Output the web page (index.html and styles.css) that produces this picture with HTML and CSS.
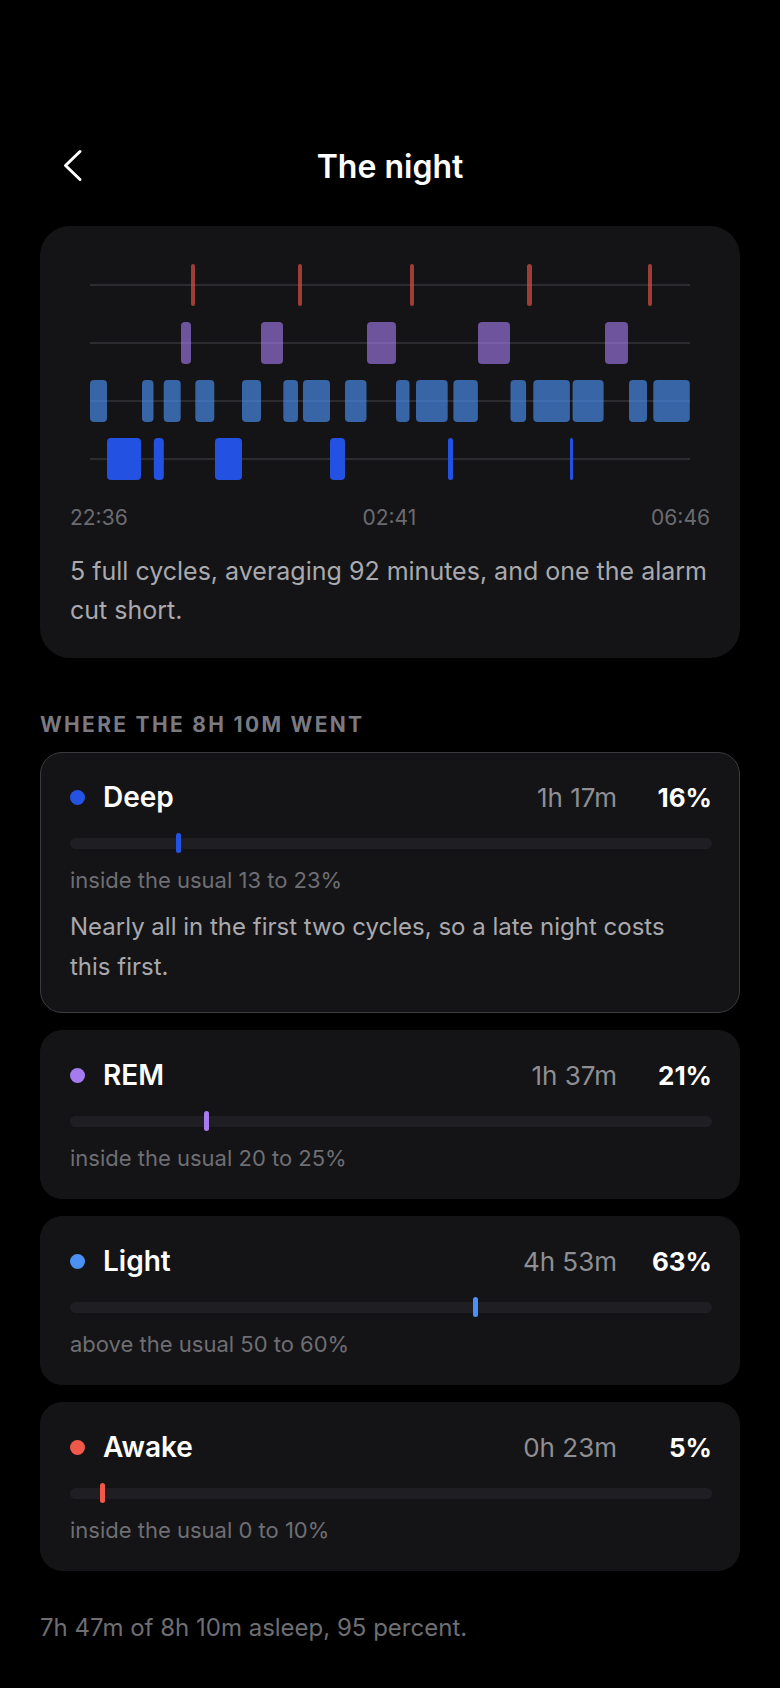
FILE: index.html
```html
<!DOCTYPE html>
<html>
<head>
    <title>The night</title>
    <link rel="stylesheet" href="styles.css">
</head>
<body>
    <header class="topbar">
        <a class="back" href="#">
            <svg width="22" height="34" viewBox="0 0 22 34"><path d="M18 2.5 L3.5 16.5 L18 30.5" fill="none" stroke="#fff" stroke-width="3" stroke-linecap="round" stroke-linejoin="round"/></svg>
        </a>
        <h1>The night</h1>
        <span></span>
    </header>

    <section class="card night">
        <svg class="hypno" width="600" height="230" viewBox="0 0 600 230">
            <!-- guide lines -->
            <g stroke="#2c2c30" stroke-width="2">
                <line x1="0" y1="29" x2="600" y2="29"/>
                <line x1="0" y1="87" x2="600" y2="87"/>
                <line x1="0" y1="145" x2="600" y2="145"/>
                <line x1="0" y1="203" x2="600" y2="203"/>
            </g>
            <!-- awake -->
            <g fill="#f0584a" fill-opacity="0.62">
                <rect x="101" y="8" width="4" height="42" rx="2"/>
                <rect x="208" y="8" width="4" height="42" rx="2"/>
                <rect x="320" y="8" width="4" height="42" rx="2"/>
                <rect x="437" y="8" width="5" height="42" rx="2.5"/>
                <rect x="558" y="8" width="4" height="42" rx="2"/>
            </g>
            <!-- rem -->
            <g fill="#a77bf0" fill-opacity="0.62">
                <rect x="91" y="66" width="10" height="42" rx="4"/>
                <rect x="171" y="66" width="22" height="42" rx="4"/>
                <rect x="277" y="66" width="29" height="42" rx="4"/>
                <rect x="388" y="66" width="32" height="42" rx="4"/>
                <rect x="515" y="66" width="23" height="42" rx="4"/>
            </g>
            <!-- light -->
            <g fill="#4a90f5" fill-opacity="0.65">
                <rect x="0" y="124" width="17" height="42" rx="4"/>
                <rect x="52" y="124" width="11.5" height="42" rx="4"/>
                <rect x="73.7" y="124" width="17" height="42" rx="4"/>
                <rect x="105.3" y="124" width="19" height="42" rx="4"/>
                <rect x="152" y="124" width="19" height="42" rx="4"/>
                <rect x="193.3" y="124" width="14.7" height="42" rx="4"/>
                <rect x="213" y="124" width="27" height="42" rx="4"/>
                <rect x="255" y="124" width="21.5" height="42" rx="4"/>
                <rect x="306" y="124" width="13.5" height="42" rx="4"/>
                <rect x="326" y="124" width="31.7" height="42" rx="4"/>
                <rect x="363.4" y="124" width="24.5" height="42" rx="4"/>
                <rect x="420.5" y="124" width="15.6" height="42" rx="4"/>
                <rect x="443.3" y="124" width="36.6" height="42" rx="4"/>
                <rect x="482.6" y="124" width="31" height="42" rx="4"/>
                <rect x="539" y="124" width="18" height="42" rx="4"/>
                <rect x="563.3" y="124" width="36.5" height="42" rx="4"/>
            </g>
            <!-- deep -->
            <g fill="#2352e2">
                <rect x="17" y="182" width="34" height="42" rx="4"/>
                <rect x="63.8" y="182" width="10" height="42" rx="4"/>
                <rect x="125" y="182" width="27" height="42" rx="4"/>
                <rect x="240" y="182" width="15" height="42" rx="4"/>
                <rect x="358" y="182" width="5" height="42" rx="2.5"/>
                <rect x="480" y="182" width="3" height="42" rx="1.5"/>
            </g>
        </svg>
        <div class="times">
            <span>22:36</span>
            <span>02:41</span>
            <span>06:46</span>
        </div>
        <p class="night-note">5 full cycles, averaging 92 minutes, and one the alarm cut short.</p>
    </section>

    <h2 class="section-title">WHERE THE 8H 10M WENT</h2>

    <div class="stages">
        <div class="stage open">
            <div class="stage-head">
                <span class="dot deep"></span>
                <span class="stage-name">Deep</span>
                <span class="stage-time">1h 17m</span>
                <span class="stage-pct">16%</span>
            </div>
            <div class="meter">
                <span class="mark deep" style="left: 16.5%"></span>
            </div>
            <p class="usual">inside the usual 13 to 23%</p>
            <p class="stage-note">Nearly all in the first two cycles, so a late night costs this first.</p>
        </div>

        <div class="stage">
            <div class="stage-head">
                <span class="dot rem"></span>
                <span class="stage-name">REM</span>
                <span class="stage-time">1h 37m</span>
                <span class="stage-pct">21%</span>
            </div>
            <div class="meter">
                <span class="mark rem" style="left: 20.8%"></span>
            </div>
            <p class="usual">inside the usual 20 to 25%</p>
        </div>

        <div class="stage">
            <div class="stage-head">
                <span class="dot light"></span>
                <span class="stage-name">Light</span>
                <span class="stage-time">4h 53m</span>
                <span class="stage-pct">63%</span>
            </div>
            <div class="meter">
                <span class="mark light" style="left: 62.7%"></span>
            </div>
            <p class="usual">above the usual 50 to 60%</p>
        </div>

        <div class="stage">
            <div class="stage-head">
                <span class="dot awake"></span>
                <span class="stage-name">Awake</span>
                <span class="stage-time">0h 23m</span>
                <span class="stage-pct">5%</span>
            </div>
            <div class="meter">
                <span class="mark awake" style="left: 4.7%"></span>
            </div>
            <p class="usual">inside the usual 0 to 10%</p>
        </div>
    </div>

    <p class="summary">7h 47m of 8h 10m asleep, 95 percent.</p>
</body>
</html>
```

FILE: styles.css
```css
body {
    font-family: Inter, "Noto Sans", sans-serif;
    margin: 0;
    padding: 136px 40px 40px;
    background-color: #000;
    color: #fff;
}
.topbar {
    display: grid;
    grid-template-columns: 1fr auto 1fr;
    align-items: center;
    height: 60px;
    margin-bottom: 30px;
}
.back svg {
    display: block;
    margin-left: 22px;
}
.topbar h1 {
    margin: 0;
    font-size: 32px;
    font-weight: 600;
}
.card {
    background-color: #141416;
    border-radius: 30px;
    padding: 30px 30px 28px;
}
.hypno {
    display: block;
    margin: 0 auto;
}
.times {
    display: flex;
    justify-content: space-between;
    margin-top: 20px;
    font-size: 21px;
    line-height: 24px;
    color: #6b6b70;
}
.night-note {
    margin: 22px 0 0;
    font-size: 25px;
    line-height: 39px;
    color: #a9a9ae;
}
.section-title {
    margin: 55px 0 15px;
    font-size: 21px;
    line-height: 24px;
    font-weight: 700;
    letter-spacing: 0.11em;
    color: #7a7a80;
}
.stages {
    display: flex;
    flex-direction: column;
    gap: 17px;
}
.stage {
    background-color: #141416;
    border: 1px solid #141416;
    border-radius: 22px;
    padding: 29px 27px 27px 29px;
}
.stage.open {
    border-color: #3a3a3f;
    padding-bottom: 25px;
}
.stage-head {
    display: flex;
    align-items: center;
    height: 30px;
}
.dot {
    width: 15px;
    height: 15px;
    border-radius: 50%;
    margin-right: 18px;
}
.deep { background-color: #2452e2; }
.rem { background-color: #a77bf0; }
.light { background-color: #4a90f5; }
.awake { background-color: #f0584a; }
.stage-name {
    flex: 1;
    font-size: 28px;
    font-weight: 600;
}
.stage-time {
    font-size: 26px;
    color: #8e8e93;
}
.stage-pct {
    width: 72px;
    text-align: right;
    margin-left: 23px;
    font-size: 26px;
    font-weight: 700;
}
.meter {
    position: relative;
    height: 20px;
    margin-top: 21px;
}
.meter::before {
    content: "";
    position: absolute;
    left: 0;
    right: 0;
    top: 4.5px;
    height: 11px;
    border-radius: 6px;
    background-color: #1f1f23;
}
.mark {
    position: absolute;
    top: 0;
    width: 5px;
    height: 20px;
    border-radius: 3px;
}
.usual {
    margin: 14px 0 0;
    font-size: 22px;
    line-height: 26px;
    color: #6e6e73;
}
.stage-note {
    margin: 14px 24px 0 0;
    font-size: 24px;
    line-height: 40px;
    color: #a9a9ae;
}
.summary {
    margin: 42px 0 0;
    font-size: 24px;
    line-height: 30px;
    color: #6e6e73;
}
```
